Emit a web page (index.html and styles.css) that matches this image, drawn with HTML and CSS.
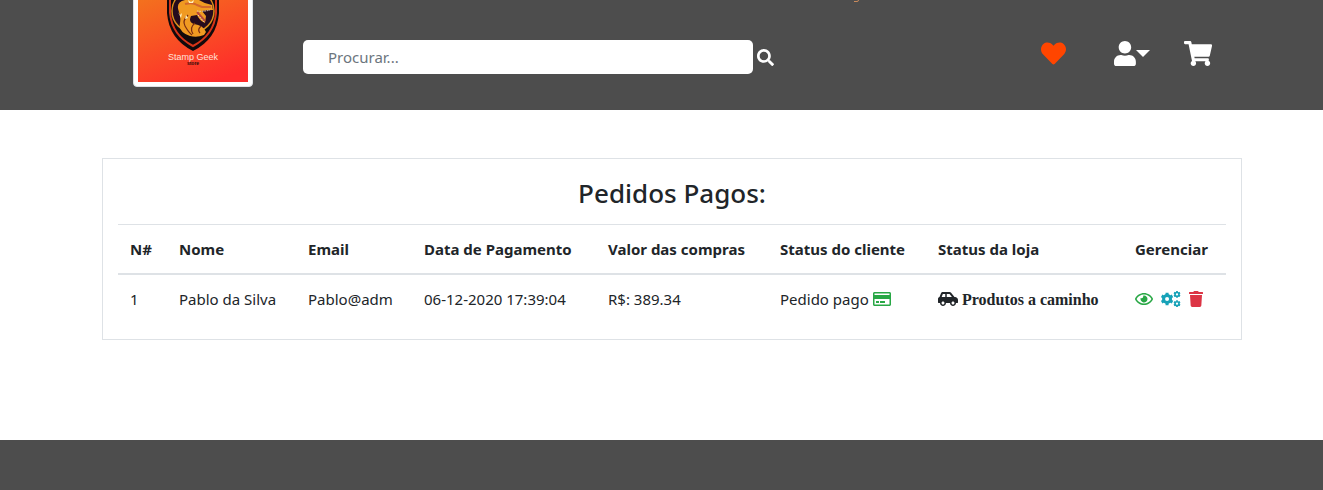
FILE: index.html
```html
<!DOCTYPE html>
<html lang="pt-br">
<head>
<meta charset="utf-8">
<title>Stamp Geek - Pedidos Pagos</title>
<link rel="stylesheet" href="styles.css">
</head>
<body>
<header class="site-header">
  <svg class="header-accent" viewBox="0 0 6 3" aria-hidden="true"><path d="M0 1.500h3q1.500 0 1.500-1.500" fill="none" stroke="#c98a5c" stroke-width="1"/></svg>
  <a class="logo" href="#" aria-label="Stamp Geek store">
    <svg class="logo-art" viewBox="0 0 110 110">
      <defs>
        <linearGradient id="sunset" x1="0.3" y1="0" x2="0.7" y2="1">
          <stop offset="0" stop-color="#f27a1c"/><stop offset="1" stop-color="#ff2b2b"/>
        </linearGradient>
      </defs>
      <rect width="110" height="110" fill="url(#sunset)"/>
      <path d="M55 9 29 19v22q2 26 26 38q24-12 26-38V19z" fill="#120a0c"/>
      <path d="M55 13 32 22v19q2 22 23 33q21-11 23-33V22z" fill="#120a0c" stroke="#d63418" stroke-width="2"/>
      <circle cx="55" cy="39" r="21" fill="#260b1d" stroke="#d98c1c" stroke-width="1.500"/>
      <path d="M41 40q-4-10 6-12q7-4 14 0q6 4 13 5l1 5q-7 0-11 1l4 5 -1 7q-6-3-8-8l-6 1q-3 6 3 8q9 1 12 8l-2 3q-7 3-14 1q-12-4-10-13q1-6-1-11z" fill="#f09a22"/>
      <path d="M50 43q-6 6-3 11q4 7 7 9M57 51q-6 5-2 11M63 54q-4 4-1 7" fill="none" stroke="#7a2c12" stroke-width="1.200"/>
      <path d="M47 32q8-2 12 1l5 2q4 0 9 0" fill="none" stroke="#d3672b" stroke-width="2"/>
      <path d="M59 40l8 9" stroke="#b8463a" stroke-width="2"/>
      <path d="M59 39q6 1 13-1M60 43l6 7" fill="none" stroke="#e4d2c2" stroke-width="1" stroke-dasharray="1.500 1"/>
      <path d="M50 28l3 2 3-2-1 3h-4zM40 40l2 3 2-2-1 5zM48 43l2 3-3 1z" fill="#fff0bd"/>
      <text class="logo-name" x="55" y="88" text-anchor="middle">Stamp Geek</text>
      <text class="logo-sub" x="55" y="93" text-anchor="middle">store</text>
    </svg>
  </a>
  <form class="search" role="search">
    <input class="search-input" type="search" placeholder="Procurar..." aria-label="Procurar">
    <button class="icon-button" type="button" aria-label="Buscar">
      <svg class="icon-search" viewBox="0 0 512 512"><path d="M505 442.700L405.300 343c-4.500-4.500-10.600-7-17-7H372c27.600-35.300 44-79.700 44-128C416 93.100 322.900 0 208 0S0 93.100 0 208s93.100 208 208 208c48.300 0 92.700-16.400 128-44v16.300c0 6.400 2.500 12.500 7 17l99.700 99.700c9.400 9.400 24.600 9.400 33.900 0l28.300-28.300c9.400-9.400 9.400-24.600.1-34zM208 336c-70.700 0-128-57.200-128-128 0-70.700 57.200-128 128-128 70.700 0 128 57.200 128 128 0 70.700-57.200 128-128 128z"/></svg>
    </button>
  </form>
  <nav class="header-nav" aria-label="Conta">
    <a class="nav-link favorite" href="#" aria-label="Favoritos">
      <svg class="nav-icon" viewBox="0 0 512 512"><path d="M462.300 62.600C407.500 15.900 326 24.300 275.700 76.200L256 96.500l-19.700-20.300C186.100 24.300 104.500 15.900 49.700 62.600c-62.800 53.600-66.100 149.800-9.900 207.900l193.500 199.800c12.500 12.900 32.800 12.900 45.300 0l193.500-199.800c56.300-58.100 53-154.300-9.800-207.900z"/></svg>
    </a>
    <button class="icon-button account" type="button" aria-label="Minha conta" aria-haspopup="true">
      <svg class="nav-icon" viewBox="0 0 448 512"><path d="M224 256c70.700 0 128-57.300 128-128S294.700 0 224 0 96 57.300 96 128s57.300 128 128 128zm89.600 32h-16.700c-22.200 10.200-46.900 16-72.900 16s-50.600-5.800-72.900-16h-16.700C60.200 288 0 348.200 0 422.400V464c0 26.500 21.500 48 48 48h352c26.500 0 48-21.500 48-48v-41.600c0-74.200-60.200-134.400-134.400-134.400z"/></svg>
      <svg class="caret" viewBox="0 0 14 7"><path d="M0 0h14L7 7z"/></svg>
    </button>
    <a class="nav-link cart" href="#" aria-label="Carrinho">
      <svg class="nav-icon" viewBox="0 0 576 512"><path d="M528.120 301.319l47.273-208C578.806 78.301 567.391 64 551.990 64H159.208l-9.166-44.810C147.758 8.021 137.930 0 126.529 0H24C10.745 0 0 10.745 0 24v16c0 13.255 10.745 24 24 24h69.883l70.248 343.435C147.325 417.100 136 435.222 136 456c0 30.928 25.072 56 56 56s56-25.072 56-56c0-15.674-6.447-29.835-16.824-40h209.647C430.447 426.165 424 440.326 424 456c0 30.928 25.072 56 56 56s56-25.072 56-56c0-22.172-12.888-41.332-31.579-50.405l5.517-24.276c3.413-15.018-8.002-29.319-23.403-29.319H218.117l-6.545-32h293.145c11.206 0 20.920-7.754 23.403-18.681z"/></svg>
    </a>
  </nav>
</header>

<main class="content">
  <section class="panel">
    <h1 class="panel-title">Pedidos Pagos:</h1>
    <table class="orders">
      <colgroup>
        <col class="col-number"><col class="col-name"><col class="col-email"><col class="col-date">
        <col class="col-value"><col class="col-client"><col class="col-store"><col class="col-manage">
      </colgroup>
      <thead>
        <tr>
          <th scope="col">N#</th><th scope="col">Nome</th><th scope="col">Email</th><th scope="col">Data de Pagamento</th>
          <th scope="col">Valor das compras</th><th scope="col">Status do cliente</th><th scope="col">Status da loja</th><th scope="col">Gerenciar</th>
        </tr>
      </thead>
      <tbody>
        <tr>
          <td>1</td>
          <td>Pablo da Silva</td>
          <td>Pablo@adm</td>
          <td>06-12-2020 17:39:04</td>
          <td>R$: 389.34</td>
          <td>Pedido pago <svg class="icon success" viewBox="0 0 576 512" aria-hidden="true"><path d="M527.900 32H48.100C21.500 32 0 53.500 0 80v352c0 26.500 21.500 48 48.100 48h479.800c26.600 0 48.100-21.500 48.100-48V80c0-26.500-21.500-48-48.100-48zM54.100 80h467.800c3.300 0 6 2.700 6 6v42H48.100V86c0-3.300 2.700-6 6-6zm467.800 352H54.100c-3.300 0-6-2.700-6-6V256h479.800v170c0 3.300-2.700 6-6 6zM192 332v40c0 6.600-5.400 12-12 12h-72c-6.600 0-12-5.400-12-12v-40c0-6.600 5.400-12 12-12h72c6.600 0 12 5.400 12 12zm192 0v40c0 6.600-5.400 12-12 12H236c-6.600 0-12-5.400-12-12v-40c0-6.600 5.400-12 12-12h136c6.600 0 12 5.400 12 12z"/></svg></td>
          <td class="shipping"><svg class="icon" viewBox="0 0 640 512" aria-hidden="true"><path d="M544 192h-16L419.220 56.020A64.025 64.025 0 0 0 369.240 32H155.330c-26.170 0-49.700 15.930-59.420 40.230L48 194.260C20.440 201.400 0 226.210 0 256v112c0 8.840 7.160 16 16 16h48c0 53.020 42.980 96 96 96s96-42.980 96-96h128c0 53.020 42.980 96 96 96s96-42.980 96-96h48c8.840 0 16-7.160 16-16v-80c0-53.020-42.980-96-96-96zM160 432c-26.470 0-48-21.530-48-48s21.530-48 48-48 48 21.530 48 48-21.530 48-48 48zm72-240H116.930l38.400-96H232v96zm48 0V96h89.240l76.800 96H280zm200 240c-26.470 0-48-21.530-48-48s21.530-48 48-48 48 21.530 48 48-21.530 48-48 48z"/></svg> Produtos a caminho</td>
          <td>
            <div class="actions">
              <a class="success" href="#" aria-label="Ver pedido"><svg class="icon" viewBox="0 0 576 512"><path d="M288 144a110.940 110.940 0 0 0-31.240 5 55.400 55.400 0 0 1 7.240 27 56 56 0 0 1-56 56 55.400 55.400 0 0 1-27-7.240A111.710 111.710 0 1 0 288 144zm284.520 97.400C518.290 135.590 410.930 64 288 64S57.680 135.640 3.480 241.410a32.350 32.350 0 0 0 0 29.190C57.710 376.410 165.070 448 288 448s230.320-71.640 284.520-177.410a32.350 32.350 0 0 0 0-29.190zM288 400c-98.650 0-189.090-55-237.930-144C98.910 167 189.340 112 288 112s189.090 55 237.930 144C477.100 345 386.660 400 288 400z"/></svg></a>
              <a class="info" href="#" aria-label="Configurar pedido"><svg class="icon" viewBox="0 0 640 512">
                <g fill="none" stroke="currentColor">
                  <circle cx="194" cy="256" r="112" stroke-width="96"/>
                  <path stroke-width="96" d="M194 130V54M194 382V458M303 193L368 156M303 319L368 356M85 193L20 156M85 319L20 356"/>
                  <circle cx="512" cy="108" r="62" stroke-width="50"/>
                  <path stroke-width="56" d="M512 40V0M512 176V216M567 76L608 52M567 140L608 164M457 76L416 52M457 140L416 164"/>
                  <circle cx="512" cy="404" r="62" stroke-width="50"/>
                  <path stroke-width="56" d="M512 336V296M512 472V512M567 372L608 348M567 436L608 460M457 372L416 348M457 436L416 460"/>
                </g></svg></a>
              <a class="danger" href="#" aria-label="Excluir pedido"><svg class="icon" viewBox="0 0 448 512"><path d="M432 32H312l-9.400-18.700A24 24 0 0 0 281.100 0H166.800a23.720 23.720 0 0 0-21.400 13.300L136 32H16A16 16 0 0 0 0 48v32a16 16 0 0 0 16 16h416a16 16 0 0 0 16-16V48a16 16 0 0 0-16-16zM53.200 467a48 48 0 0 0 47.900 45h245.800a48 48 0 0 0 47.900-45L416 128H32z"/></svg></a>
            </div>
          </td>
        </tr>
      </tbody>
    </table>
  </section>
</main>
<footer class="site-footer"></footer>
</body>
</html>
```
FILE: styles.css
```css
* { box-sizing: border-box; }

body {
  margin: 0;
  min-height: 100vh;
  display: flex;
  flex-direction: column;
  background: #fff;
  color: #212529;
  font: 15px/24px "Segoe UI", "Noto Sans", sans-serif;
}

svg { fill: currentColor; }

.site-header {
  position: relative;
  display: flex;
  align-items: flex-start;
  padding: 0 111px 23px 133px;
  overflow: hidden;
  background: #4d4d4d;
  color: #fff;
}

.header-accent {
  position: absolute;
  top: 0;
  left: 854px;
  width: 6px;
  height: 3px;
}

.logo {
  flex: none;
  margin-top: -33px;
  padding: 4px;
  border: 1px solid #dee2e6;
  border-radius: 4px;
  background: #fff;
}

.logo-art { display: block; width: 110px; height: 110px; }

.logo-name {
  fill: #ffe3da;
  font: 9px "Liberation Sans Narrow", "Liberation Sans", sans-serif;
}

.logo-sub {
  fill: #2b0a08;
  font: bold 5px "Liberation Sans", sans-serif;
}

.search {
  flex: 0 1 471px;
  display: flex;
  align-items: center;
  gap: 4px;
  margin: 40px 0 0 50px;
}

.search-input {
  flex: 1;
  min-width: 0;
  height: 34px;
  padding: 0 25px;
  border: 0;
  border-radius: 5px;
  background: #fff;
  color: #495057;
  font: inherit;
}

.search-input::placeholder { color: #6c757d; opacity: 1; }

.icon-button {
  display: flex;
  align-items: center;
  padding: 0;
  border: 0;
  background: none;
  color: inherit;
}

.icon-search { display: block; width: 17px; height: 17px; }

.header-nav {
  display: flex;
  align-items: center;
  gap: 34px;
  margin: 41px 0 0 auto;
}

.nav-link { display: block; color: inherit; }
.favorite { margin-right: 14px; color: #ff4500; }
.nav-icon { display: block; height: 25px; }
.caret { width: 14px; height: 7px; }

.content { padding: 48px 81px 100px 102px; }

.panel {
  max-width: 1140px;
  padding: 15px 15px 16px;
  border: 1px solid #dee2e6;
}

.panel-title {
  margin: 0;
  padding: 2px 0 14px;
  font-size: 26px;
  font-weight: 500;
  line-height: 34px;
  text-align: center;
}

.orders {
  width: 100%;
  table-layout: fixed;
  border-collapse: collapse;
}

.col-number { width: 49px; }
.col-name { width: 129px; }
.col-email { width: 116px; }
.col-date { width: 184px; }
.col-value { width: 172px; }
.col-client { width: 158px; }
.col-store { width: 197px; }
.col-manage { width: 103px; }

.orders th,
.orders td {
  padding: 12px 0 12px 12px;
  border-top: 1px solid #dee2e6;
  text-align: left;
  white-space: nowrap;
}

.orders th { border-bottom: 2px solid #dee2e6; font-weight: 700; }

.orders .shipping {
  padding: 13px 0 11px 12px;
  font-family: "Liberation Serif", serif;
  font-size: 16px;
  font-weight: 700;
}

.icon {
  height: 16px;
  vertical-align: -2px;
}

.actions { display: flex; align-items: center; gap: 8px; }
.actions .icon { display: block; }

.success { color: #28a745; }
.info { color: #17a2b8; }
.danger { color: #dc3545; }

.site-footer {
  flex: 1;
  min-height: 50px;
  background: #4d4d4d;
}
```
